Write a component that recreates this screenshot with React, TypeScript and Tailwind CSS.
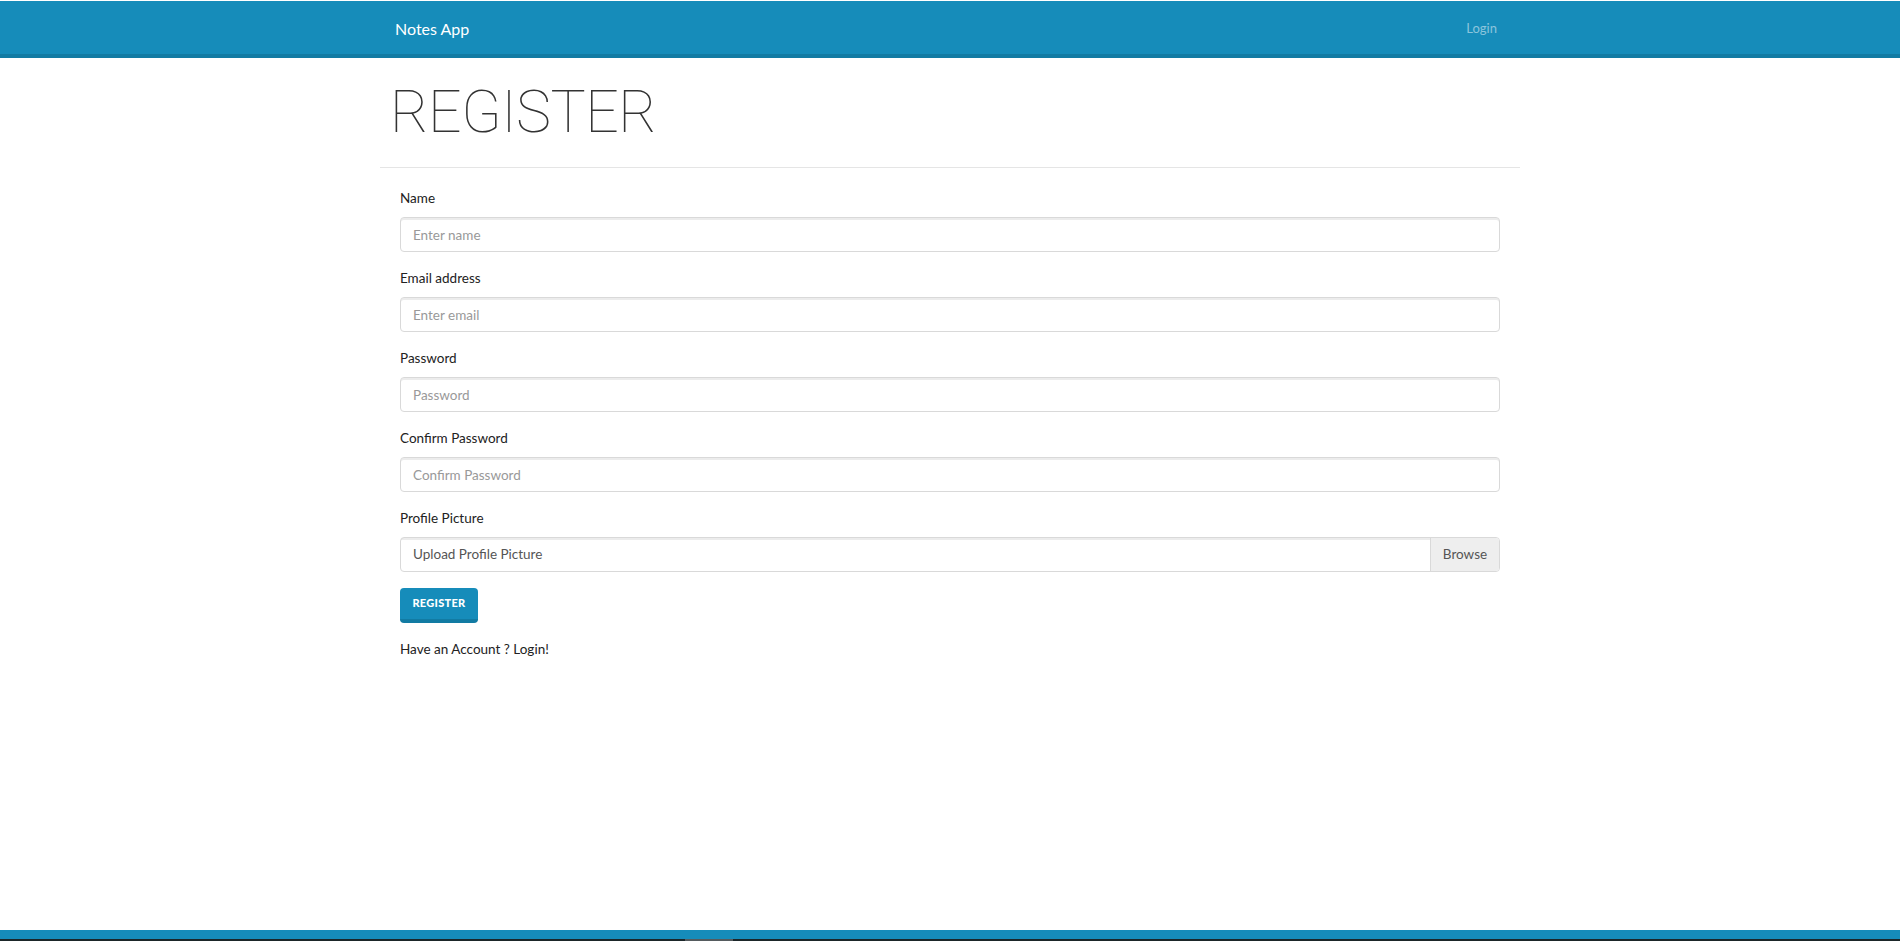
import React from "react";

const font = { fontFamily: '"Lato", "Noto Sans", sans-serif' };

const fields = [
  { label: "Name", placeholder: "Enter name", type: "text" },
  { label: "Email address", placeholder: "Enter email", type: "email" },
  { label: "Password", placeholder: "Password", type: "password" },
  { label: "Confirm Password", placeholder: "Confirm Password", type: "password" },
];

const Field: React.FC<{ label: string; placeholder: string; type: string }> = ({
  label,
  placeholder,
  type,
}) => (
  <div className="mb-4">
    <label className="block text-[13.5px] leading-[20px] text-[#222] mb-[9px]">{label}</label>
    <input
      type={type}
      placeholder={placeholder}
      className="block w-full h-[35px] px-3 text-[13.5px] text-[#555] placeholder:text-[#999] bg-white border border-[#d9d9d9] rounded-[4px] shadow-[inset_0_2px_0_rgba(0,0,0,0.075)] outline-none"
    />
  </div>
);

const App: React.FC = () => {
  return (
    <div className="h-[941px] flex flex-col bg-white overflow-hidden" style={font}>
      {/* navbar */}
      <nav className="mt-px h-[57px] bg-[#168cba] border-b-4 border-[#127ba3]">
        <div className="w-[1140px] mx-auto px-[15px] h-full flex items-center justify-between">
          <a href="#" className="text-white text-[16px] leading-none pt-[3px]">
            Notes App
          </a>
          <a href="#" className="text-white/50 text-[13px] px-2 pt-[3px]">
            Login
          </a>
        </div>
      </nav>

      <main className="flex-1 w-[1140px] mx-auto">
        <h1
          className="pl-[10px] pr-[15px] pt-[19px] pb-[20px] text-[59px] leading-[70px] font-thin text-[#333] tracking-[-0.5px]"
          style={{ fontFamily: '"Roboto", "Lato", sans-serif' }}
        >
          REGISTER
        </h1>
        <hr className="border-0 border-t border-[#e5e5e5]" />

        <form className="px-5 pt-5" onSubmit={(e) => e.preventDefault()}>
          {fields.map((f) => (
            <Field key={f.label} {...f} />
          ))}

          <div className="mb-4">
            <label className="block text-[13.5px] leading-[20px] text-[#222] mb-[9px]">
              Profile Picture
            </label>
            <div className="flex h-[35px] border border-[#d9d9d9] rounded-[4px] overflow-hidden">
              <div className="flex-1 flex items-center px-3 text-[13.5px] text-[#555] shadow-[inset_0_2px_0_rgba(0,0,0,0.075)]">
                Upload Profile Picture
              </div>
              <div className="w-[69px] flex items-center justify-center bg-[#eee] border-l border-[#d9d9d9] text-[13.5px] text-[#555]">
                Browse
              </div>
            </div>
          </div>

          <button
            type="submit"
            className="h-[35px] w-[78px] rounded-[4px] bg-[#168cba] border-b-4 border-[#127ba3] text-white text-[11px] font-black uppercase tracking-[0.3px]"
          >
            Register
          </button>

          <p className="mt-4 text-[13.5px] leading-[20px] text-[#222]">
            Have an Account ? <a href="#">Login!</a>
          </p>
        </form>
      </main>

      <div className="h-[9px] bg-[#168cba]" />
      <div className="h-[2px] flex bg-[#1b2629]">
        <div className="w-[685px]" />
        <div className="w-[48px] bg-[#555b5e]" />
      </div>
    </div>
  );
};

export default App;
